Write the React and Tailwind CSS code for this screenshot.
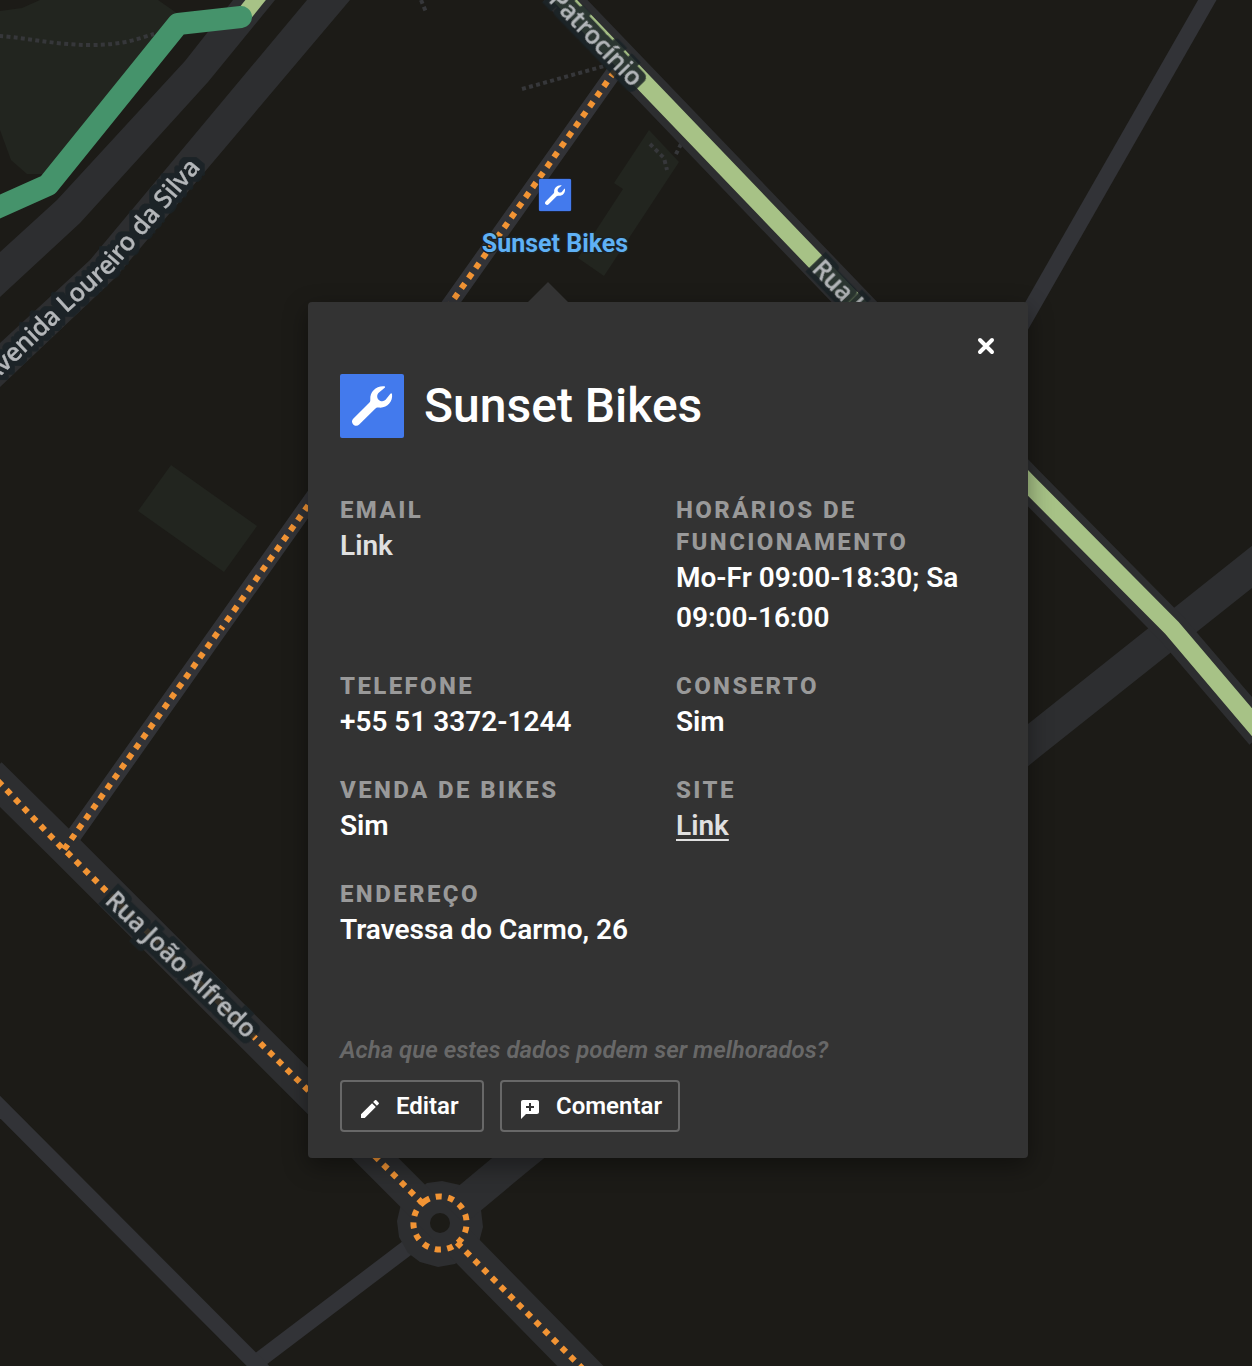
import React from "react";

const ROAD = "#2d2e30";
const LANE = "#323337";
const PARK = "#22251f";
const GROUND = "#1c1b17";
const ORANGE = "#f29434";
const LIME = "#a7c286";

function StreetLabel({ children, ...rest }) {
  return (
    <text
      fontFamily='"Noto Sans", sans-serif'
      fontSize="25"
      fontWeight="500"
      fill="#b4b7ba"
      stroke="#b4b7ba"
      strokeWidth="0.4"
      filter="url(#halo)"
      {...rest}
    >
      {children}
    </text>
  );
}

function Wrench({ className }) {
  return (
    <svg viewBox="0 0 64 64" className={className} aria-hidden="true">
      <WrenchShape />
    </svg>
  );
}

function WrenchShape() {
  return (
    <>
      <rect width="64" height="64" rx="2" fill="#437aed" />
      <path
        fill="#fff"
        d="M45 12.4C36.500 11.300 29.700 17.600 30.300 25.500C30.400 27 30.100 27.900 29 29L13.200 44.800C11.600 46.400 11.600 48.900 13.200 50.500C14.800 52.300 17.500 52.300 19.200 50.600L35.200 34.700C36.200 33.700 37 33.400 38.300 33.500C46.500 34.700 53.200 28.500 52 19.600L50.600 19.500L45.600 25.800C42.800 28.600 37.300 26.900 37.200 22.400C37.200 20.700 37.800 19.500 39 18.400L45 13.600Z"
      />
    </>
  );
}

function CityMap() {
  return (
    <svg
      className="absolute inset-0 h-full w-full"
      viewBox="0 0 1252 1366"
      preserveAspectRatio="xMinYMin slice"
      fill="none"
      role="img"
      aria-label="Mapa"
    >
      <g fill={PARK}>
        <path d="M0 11L22 8L40 0H158L178 14L48 174H27L11 160L0 130Z" />
        <path d="M171 465L257 526L224 572L138 511Z" />
        <path d="M649 130L679 162L604 276L578 258L623 189L614 183Z" />
      </g>

      <g stroke="#36373a" strokeWidth="4" strokeDasharray="4 3.3">
        <path d="M-1 36C30 38 55 45 90 45S140 38 154 34" />
        <path d="M522 89L608 65" />
        <path d="M650 144L664 158L667 170" />
        <path d="M681 144L675 156" />
        <path d="M421 0L426 12" />
      </g>

      <g stroke={LANE} strokeWidth="16">
        <path d="M1213 -10L1014 338" />
        <path d="M617 68L222 626L65 848" />
        <path d="M440 1223L254 1364" />
        <path d="M-10 1097L270 1378" />
      </g>

      <g fill={ROAD}>
        <path d="M233 0L185 61L57 200L0 252V297L80 223L208 82L275 0Z" />
        <path d="M307 0L90 260L0 343V387L115 278L350 0Z" />
        <path d="M427 1183L442 1181L460 1185L481 1210L483 1227L479 1242L455 1264L438 1267L420 1262L408 1253L399 1237L397 1221L401 1204Z" />
      </g>
      <g stroke={ROAD} strokeWidth="33">
        <path d="M440 1223L518 1158L1028 745L1262 559" />
        <path d="M555 -10L1028 483L1172 629L1262 734" />
        <path d="M-10 774L65 848L440 1223L600 1386" />
      </g>
      <circle cx="440" cy="1223" r="10" fill={GROUND} />

      <path d="M242 17L262 -8" stroke={LIME} strokeWidth="16" />
      <path
        d="M-10 211L48 185L178 24L241 17"
        stroke="#45936b"
        strokeWidth="22"
        strokeLinecap="round"
        strokeLinejoin="round"
      />
      <path d="M555 -10L1028 483L1172 628L1262 734" stroke={LIME} strokeWidth="18" />

      <g stroke={ORANGE} strokeWidth="6" strokeDasharray="6 6.35">
        <path d="M614.400 71.500L221 629" />
        <path d="M217.500 632.800L63 851" />
        <path d="M-2 781L62 848" />
        <path d="M66.900 852.200L422.500 1203.200" />
        <path d="M457 1242.700L600 1386" />
        <circle cx="440" cy="1223" r="26.600" transform="rotate(234 440 1223)" />
      </g>

      <defs>
        <path id="avenida" d="M-60 431L5 372L68 312L112 272L201 168" />
        <filter id="halo" x="-20%" y="-60%" width="140%" height="220%" colorInterpolationFilters="sRGB">
          <feMorphology in="SourceAlpha" operator="dilate" radius="5" result="spread" />
          <feFlood floodColor="#1a2226" floodOpacity="0.88" />
          <feComposite in2="spread" operator="in" result="glow" />
          <feMerge>
            <feMergeNode in="glow" />
            <feMergeNode in="SourceGraphic" />
          </feMerge>
        </filter>
      </defs>
      <StreetLabel textAnchor="end">
        <textPath href="#avenida" startOffset="100%">
          Avenida Loureiro da Silva
        </textPath>
      </StreetLabel>
      <StreetLabel textAnchor="end" transform="translate(632 88) rotate(46)">
        Patrocínio
      </StreetLabel>
      <StreetLabel transform="translate(811 270) rotate(46)">Rua José do Patrocínio</StreetLabel>
      <StreetLabel transform="translate(104 902) rotate(44)">Rua João Alfredo</StreetLabel>

      <g transform="translate(539 179) scale(0.500)">
        <rect x="-1" y="-1" width="66" height="66" rx="5" fill="#1d3366" />
        <WrenchShape />
      </g>
      <text
        x="555"
        y="252"
        textAnchor="middle"
        fontFamily='Roboto, "Liberation Sans", sans-serif'
        fontSize="25"
        fontWeight="700"
        fill="#5fb1f5"
        stroke="#1a2226"
        strokeWidth="3"
        strokeLinejoin="round"
        paintOrder="stroke"
      >
        Sunset Bikes
      </text>
    </svg>
  );
}

function Field({ label, children }) {
  return (
    <div>
      <dt className="text-2xl/8 font-extrabold uppercase tracking-widest text-[#999999]">{label}</dt>
      <dd className="text-[28px]/10 font-semibold text-white">{children}</dd>
    </div>
  );
}

function ActionButton({ icon, children }) {
  return (
    <button
      type="button"
      className="flex h-13 min-w-36 items-center gap-3.5 rounded border-2 border-[#686868] px-4 text-2xl font-semibold text-white"
    >
      <svg viewBox="0 0 24 24" className="mt-1.5 size-6 fill-white" aria-hidden="true">
        <path d={icon} />
      </svg>
      {children}
    </button>
  );
}

const PENCIL =
  "M3 17.250V21h3.750L17.810 9.940l-3.750-3.750L3 17.250zM20.710 7.040c.39-.39.39-1.020 0-1.410l-2.340-2.340c-.39-.39-1.020-.39-1.410 0l-1.830 1.830 3.750 3.750 1.830-1.830z";
const ADD_COMMENT =
  "M19 3H5c-1.100 0-2 .9-2 2v17l5-5h11c1.100 0 2-.9 2-2V5c0-1.100-.9-2-2-2zm-3 8h-3v3h-2v-3H8V9h3V6h2v3h3v2z";

function PlacePopup() {
  return (
    <section
      aria-labelledby="place-name"
      className="relative w-[720px] rounded bg-[#333333] px-8 pt-6 pb-6.5 shadow-[0_8px_24px_rgba(0,0,0,0.4)]"
    >
      <svg
        viewBox="0 0 40 20"
        className="absolute -top-5 left-55 h-5 w-10 fill-[#333333]"
        aria-hidden="true"
      >
        <path d="M0 20L20 0L40 20Z" />
      </svg>

      <div className="flex h-12 justify-end">
        <button type="button" aria-label="Fechar" className="flex h-10 w-5 items-center justify-center">
          <svg viewBox="0 0 18 18" className="size-4.5" aria-hidden="true">
            <path d="M3 3L15 15M15 3L3 15" stroke="#fff" strokeWidth="4" strokeLinecap="round" />
          </svg>
        </button>
      </div>

      <header className="flex items-center gap-5">
        <Wrench className="size-16" />
        <h1 id="place-name" className="text-5xl/16 font-medium text-white">
          Sunset Bikes
        </h1>
      </header>

      <dl className="mt-14 grid grid-cols-2 gap-x-4 gap-y-8">
        <Field label="Email">
          <a href="#email" className="text-[#e0e0e0]">
            Link
          </a>
        </Field>
        <Field label="Horários de funcionamento">Mo-Fr 09:00-18:30; Sa 09:00-16:00</Field>
        <Field label="Telefone">+55 51 3372-1244</Field>
        <Field label="Conserto">Sim</Field>
        <Field label="Venda de bikes">Sim</Field>
        <Field label="Site">
          <a href="#site" className="text-[#e0e0e0] underline decoration-2 underline-offset-4">
            Link
          </a>
        </Field>
        <Field label="Endereço">Travessa do Carmo, 26</Field>
      </dl>

      <footer className="mt-21">
        <p className="text-2xl/8 font-semibold text-[#686868] italic">
          Acha que estes dados podem ser melhorados?
        </p>
        <div className="mt-3.5 flex gap-4">
          <ActionButton icon={PENCIL}>Editar</ActionButton>
          <ActionButton icon={ADD_COMMENT}>Comentar</ActionButton>
        </div>
      </footer>
    </section>
  );
}

export default function App() {
  return (
    <main className="relative min-h-screen overflow-hidden bg-[#1c1b17] font-[Roboto,'Liberation_Sans',sans-serif]">
      <CityMap />
      <div className="absolute top-[302px] left-[308px]">
        <PlacePopup />
      </div>
    </main>
  );
}
